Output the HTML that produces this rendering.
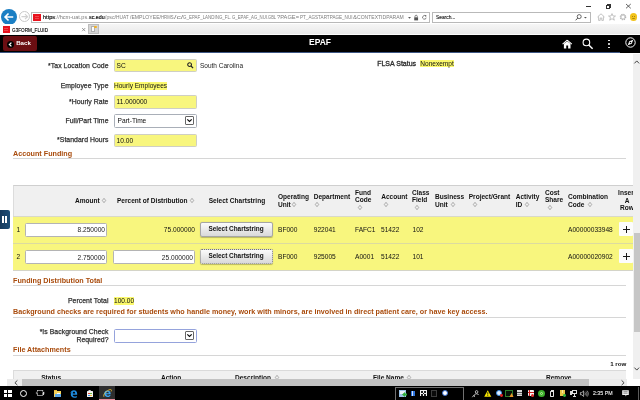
<!DOCTYPE html>
<html>
<head>
<meta charset="utf-8">
<title>G3FORM_FLUID</title>
<style>
*{box-sizing:border-box;margin:0;padding:0}
html,body{width:640px;height:400px;overflow:hidden;background:#fff}
body{font-family:"Liberation Sans",sans-serif;font-size:7px;color:#222;position:relative}
#root{position:absolute;left:0;top:0;width:640px;height:400px;overflow:hidden;will-change:transform}
.a{position:absolute;white-space:nowrap;line-height:1}
.lbl{position:absolute;white-space:nowrap;line-height:8px;font-size:6.87px;color:#303030;text-align:right;width:100px;left:8.5px;letter-spacing:.05px;-webkit-text-stroke:.25px #303030}
.inp{position:absolute;height:13.5px;background:#f8f67e;border:1px solid #cfcfc4;border-radius:1.5px;font-size:6.6px;line-height:11.5px;padding-left:1.6px;color:#0c0c0c}
.sel{position:absolute;height:14px;background:#fff;border:1px solid #a9afb8;border-radius:1.5px;font-size:6.6px;line-height:12px;padding-left:2.6px;color:#0c0c0c}
.hl{background:#fbf96c}
.sec{position:absolute;left:13px;font-size:7.2px;font-weight:bold;color:#a94b0c;white-space:nowrap;line-height:9px}
.hr{position:absolute;left:13px;width:613px;height:1px;background:#d6d6d6}
.th{position:absolute;font-size:6.55px;font-weight:bold;color:#111;line-height:7.5px;white-space:nowrap}
.td{position:absolute;font-size:6.6px;color:#111;line-height:8px;white-space:nowrap}
.num{position:absolute;height:14px;background:#fff;border:1px solid #b4b4b4;border-radius:1.5px;font-size:6.6px;line-height:12px;text-align:right;padding-right:1px;padding-top:.4px;color:#1a1a1a}
.btn{position:absolute;height:14.9px;border:1px solid #a6a6a6;border-radius:2px;background:linear-gradient(#fbfbfb,#d9d9d9);font-size:6.42px;font-weight:bold;text-align:center;line-height:12.2px;color:#111;box-shadow:0 .5px 1px rgba(0,0,0,.25)}
.plus{position:absolute;width:14px;height:14px;background:#fcfcfc;border-radius:1px}
.srt{position:absolute;width:4px;height:5px}
.u{font-size:6.1px;transform-origin:0 0}
svg{position:absolute;overflow:visible}
</style>
</head>
<body>
<div id="root">
<!-- browser chrome -->
<div class="a" id="chrome" style="left:0;top:0;width:640px;height:24px;background:#fff"></div>
<div class="a" id="tabs" style="left:0;top:24px;width:640px;height:10px;background:linear-gradient(#f6f6f6,#e9e9e9)"></div>
<!-- back / forward -->
<div class="a" style="left:1px;top:9px;width:16px;height:16px;border-radius:50%;background:#1b7fc4"></div>
<svg style="left:1px;top:9px" width="16" height="16" viewBox="0 0 17 17"><path d="M13 8.5H4.5M8 4.8L4.3 8.5L8 12.2" fill="none" stroke="#fff" stroke-width="1.7"/></svg>
<div class="a" style="left:18.8px;top:11.2px;width:11.3px;height:11.3px;border-radius:50%;border:.8px solid #c9c9c9;background:#fff"></div>
<svg style="left:18.8px;top:11.2px" width="11.3" height="11.3" viewBox="0 0 11 11"><path d="M2.4 5.5H8.2M5.8 3L8.4 5.5L5.8 8" fill="none" stroke="#d0d0d0" stroke-width="1.1"/></svg>
<!-- address box -->
<div class="a" style="left:31px;top:12px;width:399px;height:11px;border:1px solid #b9b9b9;background:#fff"></div>
<div class="a" style="left:33px;top:13.8px;width:7.5px;height:7.3px;background:#e8121d"></div>
<div class="a" style="left:34.5px;top:16px;width:4.5px;height:1px;background:#fff;opacity:.22"></div>
<div class="a" style="left:34.5px;top:18px;width:4.5px;height:1px;background:#fff;opacity:.22"></div>
<div class="a u" style="left:43px;top:14.3px;color:#111;transform:scaleX(.913)"><span style="-webkit-text-stroke:.2px #111">https</span><span style="color:#7c7c7c">://hcm-uat.ps.</span></div>
<div class="a u" style="left:88.75px;top:14.3px;color:#111;transform:scaleX(.876);-webkit-text-stroke:.2px #111">sc.edu</div>
<div class="a u" style="left:104.5px;top:14.3px;color:#7c7c7c;transform:scaleX(0.854)">/psc/</div>
<div class="a u" style="left:116px;top:14.3px;color:#7c7c7c;transform:scaleX(0.790)">HUAT</div>
<div class="a u" style="left:129.5px;top:14.3px;color:#7c7c7c;transform:scaleX(0.840)">/EMPLOYEE/</div>
<div class="a u" style="left:161px;top:14.3px;color:#7c7c7c;transform:scaleX(0.696)">HRMS</div>
<div class="a u" style="left:173.75px;top:14.3px;color:#7c7c7c;transform:scaleX(1.437)">/c/</div>
<div class="a u" style="left:183px;top:14.3px;color:#7c7c7c;transform:scaleX(0.728)">G_EPAF_LANDING_FL</div>
<div class="a u" style="left:230.3px;top:14.3px;color:#7c7c7c;transform:scaleX(0.763)">.</div>
<div class="a u" style="left:232px;top:14.3px;color:#7c7c7c;transform:scaleX(0.705)">G_EPAF_AG_NUI</div>
<div class="a u" style="left:267.2px;top:14.3px;color:#7c7c7c;transform:scaleX(0.652)">.GBL</div>
<div class="a u" style="left:277px;top:14.3px;color:#7c7c7c;transform:scaleX(0.939)">?PAGE=</div>
<div class="a u" style="left:300px;top:14.3px;color:#7c7c7c;transform:scaleX(0.753)">PT_AGSTARTPAGE_NUI</div>
<div class="a u" style="left:353px;top:14.3px;color:#7c7c7c;transform:scaleX(0.981)">&amp;</div>
<div class="a u" style="left:357px;top:14.3px;color:#7c7c7c;transform:scaleX(0.828)">CONTEXTIDPARAM</div>
<svg style="left:408px;top:16.6px" width="3" height="1.7" viewBox="0 0 5 3"><path d="M0 0H5L2.5 3Z" fill="#555"/></svg>
<svg style="left:414.3px;top:14.5px" width="4.3" height="5.4" viewBox="0 0 5 7"><rect x="0" y="3" width="5" height="4" fill="#555"/><path d="M1 3V1.8a1.5 1.5 0 0 1 3 0V3" fill="none" stroke="#555" stroke-width=".9"/></svg>
<svg style="left:421.8px;top:14.8px" width="4.7" height="4.7" viewBox="0 0 6 6"><path d="M4.8 1.6A2.3 2.3 0 1 0 5.3 3.4" fill="none" stroke="#555" stroke-width=".9"/><path d="M3.4 0L5.6 .2L5.2 2.4Z" fill="#555"/></svg>
<!-- search box -->
<div class="a" style="left:432px;top:12px;width:159px;height:11px;border:1px solid #b9b9b9;background:#fff"></div>
<div class="a u" style="left:435.6px;top:14.3px;color:#1c1c1c;-webkit-text-stroke:.15px #1c1c1c;transform:scaleX(.795)">Search...</div>
<svg style="left:575px;top:14px" width="7" height="7" viewBox="0 0 7 7"><circle cx="4.2" cy="2.6" r="2" fill="none" stroke="#555" stroke-width=".9"/><path d="M2.8 4L.6 6.3" stroke="#555" stroke-width="1"/></svg>
<svg style="left:584px;top:16.7px" width="2.8" height="1.6" viewBox="0 0 4 2"><path d="M0 0H4L2 2Z" fill="#555"/></svg>
<!-- window buttons -->
<div class="a" style="left:586.2px;top:5.9px;width:4.5px;height:.8px;background:#333"></div>
<div class="a" style="left:606px;top:5.1px;width:4.1px;height:3.6px;border:.7px solid #333"></div>
<div class="a" style="left:607.1px;top:4.2px;width:4.1px;height:3.6px;border-top:.7px solid #333;border-right:.7px solid #333"></div>
<svg style="left:626.3px;top:4.3px" width="4.8" height="4.3" viewBox="0 0 4.8 4.3"><path d="M0 0L4.8 4.3M4.8 0L0 4.3" stroke="#333" stroke-width=".75"/></svg>
<!-- toolbar icons -->
<svg style="left:597px;top:13px" width="8" height="8" viewBox="0 0 8 8"><path d="M.5 4L4 .8L7.5 4M1.6 3.4V7.4H3.2V5H4.8V7.4H6.4V3.4" fill="none" stroke="#b5b5b5" stroke-width=".8"/></svg>
<svg style="left:608px;top:13px" width="8" height="8" viewBox="0 0 8 8"><path d="M4 .6L5 3H7.5L5.5 4.6L6.3 7.2L4 5.7L1.7 7.2L2.5 4.6L.5 3H3Z" fill="none" stroke="#b5b5b5" stroke-width=".8"/></svg>
<svg style="left:619px;top:13px" width="8" height="8" viewBox="0 0 8 8"><circle cx="4" cy="4" r="2.6" fill="none" stroke="#b5b5b5" stroke-width="1.4" stroke-dasharray="1.2 .85"/><circle cx="4" cy="4" r="2.1" fill="none" stroke="#b5b5b5" stroke-width=".8"/></svg>
<div class="a" style="left:629.5px;top:13px;width:7.6px;height:7.6px;border-radius:50%;background:#f2c31b"></div>
<div class="a" style="left:631.6px;top:15.5px;width:1px;height:1px;background:#a8860f"></div>
<div class="a" style="left:634.2px;top:15.5px;width:1px;height:1px;background:#a8860f"></div>
<div class="a" style="left:631.5px;top:17.6px;width:3.6px;height:1.6px;border-bottom:.7px solid #a8860f;border-radius:0 0 3px 3px"></div>
<!-- tab -->
<div class="a" style="left:0;top:24px;width:88.3px;height:11px;background:#fff"></div><div class="a" style="left:0;top:34px;width:640px;height:1px;background:#fbfbfb"></div>
<div class="a" style="left:3px;top:26px;width:6.5px;height:6.5px;background:#e8121d"></div>
<div class="a" style="left:4.2px;top:28px;width:4px;height:.8px;background:#fff;opacity:.22"></div>
<div class="a" style="left:4.2px;top:29.8px;width:4px;height:.8px;background:#fff;opacity:.22"></div>
<div class="a u" style="left:12px;top:26.8px;color:#000;transform:scaleX(.765);-webkit-text-stroke:.15px #000">G3FORM_FLUID</div>
<svg style="left:82.4px;top:28px" width="3.4" height="3.2" viewBox="0 0 4 4"><path d="M0 0L4 4M4 0L0 4" stroke="#666" stroke-width=".8"/></svg>
<div class="a" style="left:88.3px;top:24.2px;width:10.5px;height:9.8px;background:#d5d5d5;border:.8px solid #bdbdbd"></div>
<div class="a" style="left:90.6px;top:26.4px;width:4.6px;height:5.9px;background:#fcfcfc;border:.5px solid #b0b0b0"></div>
<div class="a" style="left:94.2px;top:25.9px;width:2.6px;height:2.6px;border-radius:50%;background:#f5b120"></div>

<!-- page header -->
<div class="a" id="hdr" style="left:0;top:35px;width:640px;height:18px;background:#000"></div>
<div class="a" style="left:0;top:52px;width:620px;height:1px;background:#3d5684"></div>
<div class="a" style="left:2.8px;top:35.6px;width:34.4px;height:15.4px;background:#6b0e12;border-radius:2px"></div>
<div class="a" style="left:7px;top:40.9px;width:7px;height:7px;border-radius:50%;background:#000"></div>
<svg style="left:7px;top:40.9px" width="7" height="7" viewBox="0 0 7 7"><path d="M4.4 1.6L2.4 3.5L4.4 5.4" fill="none" stroke="#fff" stroke-width="1.3"/></svg>
<div class="a" style="left:16.2px;top:40px;font-size:6.15px;font-weight:bold;color:#fff">Back</div>
<div class="a" style="left:298px;top:38.3px;width:44px;text-align:center;font-size:8.5px;font-weight:bold;color:#fff">EPAF</div>
<svg style="left:561.7px;top:38.8px" width="10.4" height="10" viewBox="0 0 11 10"><path d="M5.5 .8L.6 5.2M5.5 .8L10.4 5.2" stroke="#fff" stroke-width="1.1" fill="none"/><path d="M2 4.8L5.5 2L9 4.8V9.8H6.5V6.6H4.5V9.8H2Z" fill="#fff"/></svg>
<svg style="left:581.9px;top:38px" width="12" height="12" viewBox="0 0 12 12"><circle cx="4.4" cy="4.4" r="3.3" fill="none" stroke="#fff" stroke-width="1.1"/><path d="M6.8 6.9L10.6 10.8" stroke="#fff" stroke-width="1.4"/></svg>
<div class="a" style="left:608.3px;top:39.5px;width:1.8px;height:1.8px;border-radius:50%;background:#fff"></div>
<div class="a" style="left:608.3px;top:43px;width:1.8px;height:1.8px;border-radius:50%;background:#fff"></div>
<div class="a" style="left:608.3px;top:46.5px;width:1.8px;height:1.8px;border-radius:50%;background:#fff"></div>
<svg style="left:625px;top:36.5px" width="11" height="11" viewBox="0 0 11 11"><circle cx="5.5" cy="5.5" r="4.7" fill="none" stroke="#fff" stroke-width="1"/><path d="M8.3 2.7L6.7 6.7L2.7 8.3L4.3 4.3Z" fill="#fff"/><circle cx="5.5" cy="5.5" r=".8" fill="#000"/></svg>

<!-- form -->
<div class="lbl" style="top:62px">*Tax Location Code</div>
<div class="inp" style="left:114px;top:58.7px;width:83px;height:13.8px;line-height:11.8px">SC</div>
<svg style="left:186.6px;top:62.2px" width="6.6" height="6.6" viewBox="0 0 6.6 6.6"><circle cx="2.6" cy="2.6" r="1.9" fill="none" stroke="#222" stroke-width="1.05"/><path d="M4 4L6.1 6.1" stroke="#222" stroke-width="1.25"/></svg>
<div class="a" style="left:200px;top:63px;font-size:6.5px;color:#222">South Carolina</div>
<div class="a" style="left:377.2px;top:60px;font-size:7px;color:#2b2b2b;-webkit-text-stroke:.3px #2b2b2b">FLSA Status</div>
<div class="a hl" style="left:420.3px;top:59.5px;font-size:6.55px;color:#111;line-height:7.5px">Nonexempt</div>

<div class="lbl" style="top:81.5px">Employee Type</div>
<div class="a hl" style="left:114px;top:82px;font-size:6.55px;color:#111;line-height:7.5px">Hourly Employees</div>

<div class="lbl" style="top:98px">*Hourly Rate</div>
<div class="inp" style="left:114px;top:95px;width:83px">11.000000</div>

<div class="lbl" style="top:117px">Full/Part Time</div>
<div class="sel" style="left:114px;top:114px;width:83px">Part-Time</div>
<div class="a" style="left:185px;top:116px;width:9px;height:9px;border:1px solid #666;background:#fff;border-radius:1px"></div>
<svg style="left:187px;top:119px" width="5" height="3" viewBox="0 0 5 3"><path d="M.3 .3L2.5 2.5L4.7 .3" fill="none" stroke="#111" stroke-width="1.2"/></svg>

<div class="lbl" style="top:136px">*Standard Hours</div>
<div class="inp" style="left:114px;top:133.5px;width:83px">10.00</div>

<div class="sec" style="top:149px">Account Funding</div>
<div class="hr" style="top:158px"></div>

<!-- grid -->
<div class="a" style="left:13px;top:185px;width:620px;height:32px;background:#f0f0f0;border-top:1px solid #cfcfcf;border-left:1px solid #dcdcdc"></div>
<div class="a" style="left:13px;top:216px;width:620px;height:27.5px;background:#f8f67e;border-top:1px solid #d9d9c8"></div>
<div class="a" style="left:13px;top:243px;width:620px;height:28px;background:#f8f67e;border-top:1px solid #dcdba0;border-bottom:1px solid #d4d4c8"></div>

<div class="sec" style="top:275.5px">Funding Distribution Total</div>
<div class="hr" style="top:285px"></div>

<div class="lbl" style="top:296.5px">Percent Total</div>
<div class="a hl" style="left:114px;top:297px;font-size:6.55px;color:#111;line-height:7.5px">100.00</div>

<div class="sec" style="top:307px">Background checks are required for students who handle money, work with minors, are involved in direct patient care, or have key access.</div>
<div class="hr" style="top:316.5px"></div>

<div class="lbl" style="top:327.5px">*Is Background Check<br>Required?</div>
<div class="sel" style="left:114px;top:329px;width:83px;border-color:#95a3dc"></div>
<div class="a" style="left:185px;top:331px;width:9px;height:9px;border:1px solid #666;background:#fff;border-radius:1px"></div>
<svg style="left:187px;top:334px" width="5" height="3" viewBox="0 0 5 3"><path d="M.3 .3L2.5 2.5L4.7 .3" fill="none" stroke="#111" stroke-width="1.2"/></svg>

<div class="sec" style="top:345px">File Attachments</div>
<div class="hr" style="top:355.2px"></div>
<div class="a" style="left:610.2px;top:361.4px;font-size:6.2px;font-weight:bold;color:#111">1 row</div>

<div class="a" style="left:0;top:210px;width:9.5px;height:19px;background:linear-gradient(90deg,#173a5c,#1d4e78);border-radius:0 2px 2px 0"></div>
<div class="a" style="left:2px;top:216px;width:1.5px;height:7px;background:#fff"></div><div class="a" style="left:5px;top:216px;width:1.5px;height:7px;background:#fff"></div>
<div class="th" style="left:75px;top:196.75px">Amount</div>
<svg class="srt" style="left:102px;top:198.0px" width="4" height="5" viewBox="0 0 4 5"><path d="M2 .3L3.7 2.5L2 4.7L.3 2.5Z" fill="none" stroke="#7d7d7d" stroke-width=".6"/></svg>
<div class="th" style="left:117px;top:196.75px">Percent of Distribution</div>
<svg class="srt" style="left:190px;top:198.0px" width="4" height="5" viewBox="0 0 4 5"><path d="M2 .3L3.7 2.5L2 4.7L.3 2.5Z" fill="none" stroke="#7d7d7d" stroke-width=".6"/></svg>
<div class="th" style="left:208.75px;top:196.75px">Select Chartstring</div>
<div class="th" style="left:278px;top:193.25px">Operating</div>
<div class="th" style="left:278px;top:200.75px">Unit</div>
<svg class="srt" style="left:292px;top:202.0px" width="4" height="5" viewBox="0 0 4 5"><path d="M2 .3L3.7 2.5L2 4.7L.3 2.5Z" fill="none" stroke="#7d7d7d" stroke-width=".6"/></svg>
<div class="th" style="left:313.75px;top:193.25px">Department</div>
<svg class="srt" style="left:314.5px;top:202.0px" width="4" height="5" viewBox="0 0 4 5"><path d="M2 .3L3.7 2.5L2 4.7L.3 2.5Z" fill="none" stroke="#7d7d7d" stroke-width=".6"/></svg>
<div class="th" style="left:355px;top:188.75px">Fund</div>
<div class="th" style="left:355px;top:196.25px">Code</div>
<svg class="srt" style="left:358px;top:205.0px" width="4" height="5" viewBox="0 0 4 5"><path d="M2 .3L3.7 2.5L2 4.7L.3 2.5Z" fill="none" stroke="#7d7d7d" stroke-width=".6"/></svg>
<div class="th" style="left:381.25px;top:193.25px">Account</div>
<svg class="srt" style="left:384px;top:202.0px" width="4" height="5" viewBox="0 0 4 5"><path d="M2 .3L3.7 2.5L2 4.7L.3 2.5Z" fill="none" stroke="#7d7d7d" stroke-width=".6"/></svg>
<div class="th" style="left:412px;top:188.75px">Class</div>
<div class="th" style="left:412px;top:196.25px">Field</div>
<svg class="srt" style="left:414.5px;top:205.0px" width="4" height="5" viewBox="0 0 4 5"><path d="M2 .3L3.7 2.5L2 4.7L.3 2.5Z" fill="none" stroke="#7d7d7d" stroke-width=".6"/></svg>
<div class="th" style="left:435px;top:193.25px">Business</div>
<div class="th" style="left:435px;top:200.75px">Unit</div>
<svg class="srt" style="left:451px;top:202.0px" width="4" height="5" viewBox="0 0 4 5"><path d="M2 .3L3.7 2.5L2 4.7L.3 2.5Z" fill="none" stroke="#7d7d7d" stroke-width=".6"/></svg>
<div class="th" style="left:468.75px;top:193.25px">Project/Grant</div>
<svg class="srt" style="left:472.5px;top:202.0px" width="4" height="5" viewBox="0 0 4 5"><path d="M2 .3L3.7 2.5L2 4.7L.3 2.5Z" fill="none" stroke="#7d7d7d" stroke-width=".6"/></svg>
<div class="th" style="left:515.75px;top:193.25px">Activity</div>
<div class="th" style="left:515.75px;top:200.75px">ID</div>
<svg class="srt" style="left:525px;top:202.0px" width="4" height="5" viewBox="0 0 4 5"><path d="M2 .3L3.7 2.5L2 4.7L.3 2.5Z" fill="none" stroke="#7d7d7d" stroke-width=".6"/></svg>
<div class="th" style="left:545px;top:188.75px">Cost</div>
<div class="th" style="left:545px;top:196.25px">Share</div>
<svg class="srt" style="left:547.5px;top:205.0px" width="4" height="5" viewBox="0 0 4 5"><path d="M2 .3L3.7 2.5L2 4.7L.3 2.5Z" fill="none" stroke="#7d7d7d" stroke-width=".6"/></svg>
<div class="th" style="left:568px;top:193.25px">Combination</div>
<div class="th" style="left:568px;top:200.75px">Code</div>
<svg class="srt" style="left:587.5px;top:202.0px" width="4" height="5" viewBox="0 0 4 5"><path d="M2 .3L3.7 2.5L2 4.7L.3 2.5Z" fill="none" stroke="#7d7d7d" stroke-width=".6"/></svg>
<div class="th" style="left:617px;top:188.75px;width:20px;text-align:center;overflow:hidden;width:16px"><div style="width:20px;text-align:center;line-height:7.8px">Insert<br>A<br>Row</div></div>
<div class="td" style="left:16.5px;top:225.5px">1</div>
<div class="num" style="left:25px;top:223px;width:82px">8.250000</div>
<div class="td" style="left:95px;width:100px;text-align:right;top:225.5px">75.000000</div>
<div class="btn" style="left:199.5px;top:222px;width:73px">Select Chartstring</div>
<div class="td" style="left:278px;top:225.5px">BF000</div>
<div class="td" style="left:313.75px;top:225.5px">922041</div>
<div class="td" style="left:355px;top:225.5px">FAFC1</div>
<div class="td" style="left:381px;top:225.5px">51422</div>
<div class="td" style="left:412.5px;top:225.5px">102</div>
<div class="td" style="left:568px;top:225.5px">A00000033948</div>
<div class="plus" style="left:619px;top:222.2px"></div><div class="a" style="left:623px;top:228.7px;width:7px;height:1.6px;background:#1a1a1a"></div><div class="a" style="left:625.6px;top:226.1px;width:1.6px;height:7px;background:#1a1a1a"></div>
<div class="td" style="left:16.5px;top:252.5px">2</div>
<div class="num" style="left:25px;top:250.2px;width:82px">2.750000</div>
<div class="num" style="left:112.5px;top:250.2px;width:82.5px">25.000000</div>
<div class="btn" style="left:199.5px;top:249px;width:73px;border-style:dotted;border-color:#777">Select Chartstring</div>
<div class="td" style="left:278px;top:252.5px">BF000</div>
<div class="td" style="left:313.75px;top:252.5px">925005</div>
<div class="td" style="left:355px;top:252.5px">A0001</div>
<div class="td" style="left:381px;top:252.5px">51422</div>
<div class="td" style="left:412.5px;top:252.5px">101</div>
<div class="td" style="left:568px;top:252.5px">A00000020902</div>
<div class="plus" style="left:619px;top:249.2px"></div><div class="a" style="left:623px;top:255.7px;width:7px;height:1.6px;background:#1a1a1a"></div><div class="a" style="left:625.6px;top:253.1px;width:1.6px;height:7px;background:#1a1a1a"></div>
<div class="a" style="left:13px;top:369.5px;width:613px;height:10px;background:#f0f0f0;border-top:1px solid #dadada;border-left:1px solid #dcdcdc"></div>
<div class="th" style="left:41.2px;top:374.2px">Status</div>
<div class="th" style="left:161px;top:374.2px">Action</div>
<div class="th" style="left:235px;top:374.2px">Description</div>
<div class="th" style="left:373px;top:374.2px">File Name</div>
<div class="th" style="left:546px;top:374.2px">Remove</div>
<svg class="srt" style="left:274.5px;top:375.4px" width="4" height="5" viewBox="0 0 4 5"><path d="M2 .3L3.7 2.5L2 4.7L.3 2.5Z" fill="none" stroke="#7d7d7d" stroke-width=".6"/></svg>
<svg class="srt" style="left:407px;top:375.4px" width="4" height="5" viewBox="0 0 4 5"><path d="M2 .3L3.7 2.5L2 4.7L.3 2.5Z" fill="none" stroke="#7d7d7d" stroke-width=".6"/></svg>
<div class="a" style="left:633px;top:54px;width:7px;height:325px;background:#f0f0f0"></div>
<div class="a" style="left:634px;top:233px;width:6px;height:99px;background:#c6c6c6"></div>
<svg style="left:634px;top:60px" width="5.5" height="4" viewBox="0 0 5.5 4"><path d="M.4 3.4L2.75 .9L5.1 3.4" fill="none" stroke="#444" stroke-width="1"/></svg>
<svg style="left:634px;top:367px" width="5.5" height="4" viewBox="0 0 5.5 4"><path d="M.4 .6L2.75 3.1L5.1 .6" fill="none" stroke="#444" stroke-width="1"/></svg>
<div class="a" style="left:7px;top:379px;width:626px;height:7px;background:#ebebeb"></div>
<div class="a" style="left:22px;top:379px;width:567px;height:7px;background:#c2c2c2"></div>
<svg style="left:14px;top:380px" width="4" height="5.5" viewBox="0 0 4 5.5"><path d="M3.4 .4L.9 2.75L3.4 5.1" fill="none" stroke="#444" stroke-width="1"/></svg>
<svg style="left:620.5px;top:380px" width="4" height="5.5" viewBox="0 0 4 5.5"><path d="M.6 .4L3.1 2.75L.6 5.1" fill="none" stroke="#444" stroke-width="1"/></svg>
<div class="a" style="left:627px;top:379px;width:13px;height:7px;background:#fff"></div>
<!-- taskbar -->
<div class="a" id="task" style="left:0;top:386px;width:640px;height:14px;background:#000"></div>
<div class="a" style="left:4px;top:390px;width:3.4px;height:3px;background:#fff"></div>
<div class="a" style="left:7.9px;top:390px;width:3.7px;height:3px;background:#fff"></div>
<div class="a" style="left:4px;top:393.5px;width:3.4px;height:3px;background:#fff"></div>
<div class="a" style="left:7.9px;top:393.5px;width:3.7px;height:3px;background:#fff"></div>
<div class="a" style="left:20.3px;top:390px;width:7px;height:7px;border-radius:50%;border:1.1px solid #fff"></div>
<svg style="left:35.8px;top:390.4px" width="8.4" height="6" viewBox="0 0 8.4 6"><rect x="1.6" y=".5" width="5.2" height="5" fill="none" stroke="#d8d8d8" stroke-width=".65"/><path d="M.4 1.8V4.2M8 1.8V4.2" stroke="#d0d0d0" stroke-width=".65"/><path d="M1.2 2.2H2M6.4 2.2H7.2" stroke="#000" stroke-width="1"/></svg>
<div class="a" style="left:43.2px;top:392px;width:1px;height:2.6px;background:#ddd"></div>
<div class="a" style="left:54px;top:390.2px;width:3.4px;height:1.5px;background:#e9b93a"></div>
<div class="a" style="left:54px;top:391.2px;width:7px;height:5.6px;background:#f7d35a"></div>
<div class="a" style="left:55.2px;top:393.6px;width:5.8px;height:3.2px;background:#5fa8e6"></div>
<div class="a" style="left:56.5px;top:392.6px;width:3px;height:1.2px;background:#fff"></div>
<svg style="left:70px;top:389.5px" width="7.5" height="8" viewBox="0 0 7.5 8"><path d="M.4 3.6C.7 1.4 2.2 .3 3.9 .3C6 .3 7.2 1.8 7.2 3.9V4.7H2.6C2.7 5.9 3.6 6.5 4.8 6.5C5.6 6.5 6.3 6.3 6.9 5.9V7.2C6.2 7.6 5.4 7.8 4.4 7.8C2.2 7.8 .8 6.5 .8 4.6C.8 3.4 1.5 2.5 2.4 2C2 2.3 1.2 2.8 .4 3.6ZM2.7 3.4H5.2C5.2 2.5 4.8 1.8 3.9 1.8C3.2 1.8 2.8 2.5 2.7 3.4Z" fill="#1f8fe5"/></svg>
<div class="a" style="left:86.7px;top:391.3px;width:6.5px;height:5.6px;background:#f4f4f4;border-radius:.5px"></div>
<div class="a" style="left:88.4px;top:389.6px;width:3px;height:2.5px;border:.7px solid #eee;border-bottom:none;border-radius:1.5px 1.5px 0 0"></div>
<div class="a" style="left:88.2px;top:392.6px;width:1.5px;height:1.4px;background:#e0503a"></div>
<div class="a" style="left:90.2px;top:392.6px;width:1.5px;height:1.4px;background:#6fb83f"></div>
<div class="a" style="left:88.2px;top:394.5px;width:1.5px;height:1.4px;background:#3a8fe0"></div>
<div class="a" style="left:90.2px;top:394.5px;width:1.5px;height:1.4px;background:#f0b830"></div>
<div class="a" style="left:99px;top:386px;width:16px;height:14px;background:#2e2e2e"></div>
<div class="a" style="left:99px;top:398.8px;width:16px;height:1.2px;background:#ea8c9c"></div>
<svg style="left:102.5px;top:389px" width="9" height="9" viewBox="0 0 9 9"><path d="M1.2 4.6C1.3 2.6 2.7 1.4 4.5 1.4C6.5 1.4 7.7 2.8 7.7 4.8V5.3H3.3C3.4 6.2 4 6.7 4.9 6.7C5.7 6.7 6.3 6.3 6.5 5.9H7.6C7.2 7.2 6.1 8 4.7 8C2.7 8 1.2 6.7 1.2 4.6ZM3.3 4.2H5.8C5.8 3.4 5.3 2.8 4.5 2.8C3.8 2.8 3.4 3.4 3.3 4.2Z" fill="#3ea6f2"/><path d="M.9 7.8C-.3 5.5 3.5 1.2 7.4 .5C8.6 .4 8.8 1.4 8 2.5" fill="none" stroke="#f3c53a" stroke-width=".8"/></svg>
<div class="a" style="left:395px;top:387px;width:68.5px;height:14px;border:1px solid #707070"></div>
<div class="a" style="left:399px;top:389.7px;width:6.5px;height:7px;background:#9cc4e8"></div>
<div class="a" style="left:400px;top:390.7px;width:4.5px;height:3px;background:#e8f0f8"></div>
<svg style="left:401.5px;top:392px" width="5" height="5" viewBox="0 0 5 5"><path d="M0 2.5L3 0V1.5H5V3.5H3V5Z" fill="#2fae3a"/></svg>
<div class="a" style="left:410.8px;top:390.5px;width:1.6px;height:5.6px;background:#2f74dd"></div>
<div class="a" style="left:413.4px;top:390.5px;width:1.6px;height:5.6px;background:#2f74dd"></div>
<div class="a" style="left:412.4px;top:390.5px;width:1px;height:5.6px;background:#cfe0f8"></div>
<div class="a" style="left:420.2px;top:389.7px;width:6.6px;height:6.8px;background:#f2f2f2"></div>
<div class="a" style="left:421.4px;top:391px;width:1.6px;height:1.6px;background:#222"></div>
<div class="a" style="left:424px;top:391px;width:1.6px;height:1.6px;background:#222"></div>
<div class="a" style="left:422.7px;top:392.8px;width:1.6px;height:1.6px;background:#222"></div>
<div class="a" style="left:421.4px;top:394.4px;width:1.6px;height:1.6px;background:#222"></div>
<div class="a" style="left:424px;top:394.4px;width:1.6px;height:1.6px;background:#222"></div>
<div class="a" style="left:431px;top:389.5px;width:5.8px;height:7px;border:.8px solid #3c3c3c;background:#0a0a0a"></div>
<div class="a" style="left:441.7px;top:390.2px;width:6.2px;height:6.2px;border-radius:50%;background:#fff;border:.8px solid #3b6fd0"></div>
<svg style="left:471.5px;top:389.5px" width="7" height="7.5" viewBox="0 0 7 7.5"><circle cx="4.6" cy="1.9" r="1.3" fill="none" stroke="#ddd" stroke-width=".8"/><path d="M2.4 7V5.6C2.4 4.4 3.3 3.8 4.6 3.8C5.6 3.8 6.5 4.3 6.7 5" fill="none" stroke="#ddd" stroke-width=".8"/><path d="M.3 7.2L2.2 4.8" stroke="#ddd" stroke-width=".8"/></svg>
<svg style="left:484px;top:389.5px" width="7.5" height="7" viewBox="0 0 7.5 7"><path d="M3.75 .2L7.3 6.8H.2Z" fill="#f7e600"/><path d="M3.75 2.2V4.6M3.75 5.2V6" stroke="#111" stroke-width=".8"/></svg>
<div class="a" style="left:495.6px;top:389.6px;width:6.4px;height:6.4px;border-radius:50%;background:#dfeeff;border:1.2px solid #3a8ee6"></div>
<div class="a" style="left:499.8px;top:394.2px;width:2.8px;height:2.8px;border-radius:50%;background:#e02020"></div>
<div class="a" style="left:505.4px;top:389.5px;width:7.4px;height:7px;border:.9px solid #2c7d2c;background:#061206"></div>
<svg style="left:508.5px;top:392.5px" width="4.5" height="4" viewBox="0 0 4.5 4"><path d="M2.6 0L4.5 4H.4Z" fill="#e8962a"/></svg>
<div class="a" style="left:516.8px;top:390px;width:5.5px;height:6.2px;background:#d8d8d8"></div>
<div class="a" style="left:517.3px;top:392px;width:4.5px;height:0.8px;background:#555"></div>
<div class="a" style="left:517.3px;top:394px;width:4.5px;height:0.6px;background:#888"></div>
<div class="a" style="left:527.6px;top:390px;width:6px;height:5.6px;background:#f4f4f4;border-radius:1px"></div>
<div class="a" style="left:529.2px;top:390px;width:1.3px;height:5.6px;background:#d02020"></div>
<div class="a" style="left:527.6px;top:392px;width:6px;height:1.2px;background:#d02020"></div>
<div class="a" style="left:531px;top:393.8px;width:3.2px;height:3.2px;border-radius:50%;background:#e03030"></div>
<div class="a" style="left:538px;top:389.7px;width:7px;height:7px;border-radius:50%;background:#3db02c"></div>
<div class="a" style="left:540px;top:391.7px;width:3px;height:3px;border-radius:50%;border:.8px solid #b8e8a0"></div>
<div class="a" style="left:550px;top:391.4px;width:4.4px;height:5.4px;border:.8px solid #e4e4e4;border-radius:.8px"></div>
<div class="a" style="left:551px;top:389.5px;width:2.6px;height:2.4px;border:.7px solid #e4e4e4"></div>
<div class="a" style="left:560px;top:389.6px;width:5px;height:6.2px;background:#e6c646"></div>
<div class="a" style="left:561.6px;top:390.4px;width:1.8px;height:3px;background:#f6e9a0"></div>
<div class="a" style="left:562.8px;top:393.8px;width:2.8px;height:2.8px;border-radius:50%;background:#2fb43a"></div>
<div class="a" style="left:571.5px;top:390px;width:5.3px;height:4.2px;border:.8px solid #e0e0e0"></div>
<div class="a" style="left:569.8px;top:391.4px;width:2.2px;height:3.4px;background:#000"></div>
<div class="a" style="left:569.8px;top:391.4px;width:2.4px;height:3.6px;border:.7px solid #ddd"></div>
<div class="a" style="left:573px;top:395.6px;width:3px;height:0.8px;background:#ddd"></div>
<div class="a" style="left:574.2px;top:394.2px;width:0.8px;height:1.6px;background:#ddd"></div>
<svg style="left:580px;top:389.6px" width="8.5" height="7.4" viewBox="0 0 8.5 7.4"><path d="M.4 2.6H1.8L3.6 .9V6.5L1.8 4.8H.4Z" fill="none" stroke="#e4e4e4" stroke-width=".7"/><path d="M4.9 2.4C5.5 3.2 5.5 4.2 4.9 5M6 1.5C7.2 2.9 7.2 4.5 6 5.9M7.1 .7C8.7 2.6 8.7 4.8 7.1 6.7" fill="none" stroke="#d8d8d8" stroke-width=".6"/></svg>
<div class="a u" style="left:593px;top:390.2px;color:#f0f0f0;-webkit-text-stroke:.12px #f0f0f0;transform:scaleX(.86)">2:35 PM</div>
<svg style="left:622px;top:390px" width="7" height="6.6" viewBox="0 0 7 6.6"><path d="M.2 .2H6.8V5H4.6L3.5 6.4V5H.2Z" fill="#f4f4f4"/><path d="M1.4 1.7H5.6M1.4 3.2H5.6" stroke="#444" stroke-width=".6"/></svg>
<div class="a" style="left:638px;top:387px;width:0.8px;height:13px;background:#5a5a5a"></div>
</div>
</body>
</html>
